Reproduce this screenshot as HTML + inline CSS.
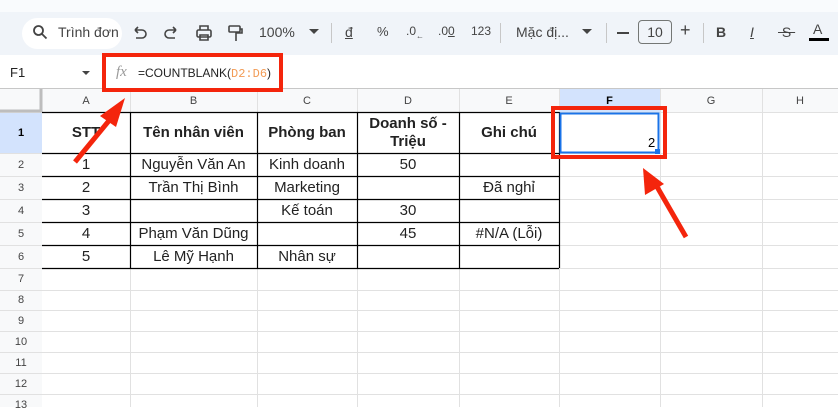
<!DOCTYPE html><html><head><meta charset="utf-8"><style>
*{margin:0;padding:0;box-sizing:border-box}
body{width:838px;height:407px;overflow:hidden;background:#fff;font-family:"Liberation Sans",Arial,sans-serif;position:relative;color:#222}
.a{position:absolute}
.tb{left:0;top:12px;width:838px;height:43px;background:#f0f4f9}
.t{position:absolute;font-size:14px;color:#444;top:24px}
.cell{position:absolute;font-size:15px;color:#222;text-align:center;display:flex;align-items:center;justify-content:center;line-height:18px}
.hd{position:absolute;font-size:11px;color:#444;display:flex;align-items:center;justify-content:center}
</style></head><body>
<div class="a" style="left:0;top:0;width:838px;height:12px;background:#f9fbfd"></div>
<div class="a tb"></div>
<div class="a" style="left:22px;top:18px;width:100px;height:31px;background:#fff;border-radius:16px"></div>
<svg class="a" style="left:32px;top:24px" width="16" height="16" viewBox="0 0 16 16"><circle cx="6.5" cy="6.5" r="4.5" fill="none" stroke="#444" stroke-width="1.8"/><path d="M10 10l4.5 4.5" stroke="#444" stroke-width="1.8"/></svg>
<div class="t" style="left:58px">Trình đơn</div>
<svg class="a" style="left:131px;top:24px;width:150px;height:18px" viewBox="0 0 150 18" fill="none" stroke="#444" stroke-width="1.6">
<path d="M4 6h7a4 4 0 010 8H5M4 6l3-3M4 6l3 3"/>
<path d="M45 6h-7a4 4 0 000 8h6M45 6l-3-3M45 6l-3 3"/>
<rect x="66" y="6" width="14" height="7" rx="1.5"/><path d="M69 6V2h8v4M69 11h8v5h-8z"/>
<rect x="98" y="2" width="11" height="6" rx="1"/><path d="M109 5h2v4h-6v2M105 11v6"/>
</svg>
<div class="t" style="left:259px">100%</div>
<div class="a" style="left:309px;top:29px;border:5px solid transparent;border-top-color:#444;border-bottom:0"></div>
<div class="a" style="left:331px;top:23px;width:1px;height:20px;background:#c7c7c7"></div>
<div class="t" style="left:345px;text-decoration:underline">đ</div>
<div class="t" style="left:377px;font-size:13px">%</div>
<div class="t" style="left:406px;font-size:12px">.0<sub style="font-size:8px">←</sub></div>
<div class="t" style="left:438px;font-size:12px">.0<span style="text-decoration:underline">0</span></div>
<div class="t" style="left:471px;font-size:12px">123</div>
<div class="a" style="left:500px;top:23px;width:1px;height:20px;background:#c7c7c7"></div>
<div class="t" style="left:516px">Mặc đị...</div>
<div class="a" style="left:582px;top:29px;border:5px solid transparent;border-top-color:#444;border-bottom:0"></div>
<div class="a" style="left:606px;top:23px;width:1px;height:20px;background:#c7c7c7"></div>
<div class="a" style="left:617px;top:32px;width:12px;height:2px;background:#444"></div>
<div class="a" style="left:638px;top:20px;width:34px;height:24px;border:1px solid #747775;border-radius:4px;font-size:14px;text-align:center;line-height:22px;color:#444">10</div>
<div class="t" style="left:680px;font-size:18px;top:20px">+</div>
<div class="a" style="left:703px;top:23px;width:1px;height:20px;background:#c7c7c7"></div>
<div class="t" style="left:716px;font-weight:bold">B</div>
<div class="t" style="left:750px;font-style:italic;text-decoration:underline">I</div>
<div class="t" style="left:778px;text-decoration:line-through">&nbsp;S&nbsp;</div>
<div class="t" style="left:813px;top:21px">A</div>
<div class="a" style="left:809px;top:38px;width:20px;height:3px;background:#000"></div>
<div class="a" style="left:10px;top:65px;font-size:13px">F1</div>
<div class="a" style="left:82px;top:71px;border:4px solid transparent;border-top-color:#444;border-bottom:0"></div>
<div class="a" style="left:116px;top:64px;font-size:15px;font-style:italic;color:#999;font-family:'Liberation Serif',serif">fx</div>
<div class="a" style="left:138px;top:66px;font-size:12px">=COUNTBLANK(<span style="color:#f29b55;font-family:'Liberation Mono',monospace">D2:D6</span>)</div>
<div class="a" style="left:0;top:88px;width:838px;height:1px;background:#c7c7c7"></div>
<svg class="a" style="left:0;top:89px" width="838" height="318">
<rect x="0" y="0" width="838" height="23" fill="#f8f9fa"/>
<rect x="0" y="0" width="42" height="318" fill="#f8f9fa"/>
<rect x="559" y="0" width="101" height="23" fill="#d3e3fd"/>
<rect x="0" y="23" width="42" height="41" fill="#d3e3fd"/>
<g stroke="#e1e1e1" stroke-width="1">
<path d="M0 23.5H838M0 87.5H838M0 110.5H838M0 133.5H838M0 156.5H838M0 179.5H838M0 201.5H838M0 221.5H838M0 242.5H838M0 263.5H838M0 284.5H838M0 305.5H838"/>
<path d="M130.5 0V318M257.5 0V318M357.5 0V318M459.5 0V318M559.5 0V318M660.5 0V318M762.5 0V318"/>
<path d="M0 64.5H838"/>
</g>
<rect x="0" y="0" width="41" height="22" fill="#f8f9fa"/>
<path d="M41 0V23M0 22H42" stroke="#bdbdbd" stroke-width="3"/>
<g stroke="#000" stroke-width="1.2" fill="none">
<path d="M42 23.5H559M42 64.5H559M42 87.5H559M42 110.5H559M42 133.5H559M42 156.5H559M42 179.5H559"/>
<path d="M130.5 23V179M257.5 23V179M357.5 23V179M459.5 23V179M559.5 23V179"/>
</g>
<rect x="560.5" y="24.5" width="98" height="39" fill="none" stroke="#1a73e8" stroke-width="2"/>
<rect x="655" y="60" width="5" height="5" fill="#1a73e8"/>
</svg>
<div class="hd" style="left:42px;top:89px;width:88px;height:23px">A</div>
<div class="hd" style="left:130px;top:89px;width:127px;height:23px">B</div>
<div class="hd" style="left:257px;top:89px;width:100px;height:23px">C</div>
<div class="hd" style="left:357px;top:89px;width:102px;height:23px">D</div>
<div class="hd" style="left:459px;top:89px;width:100px;height:23px">E</div>
<div class="hd" style="left:559px;top:89px;width:101px;height:23px;font-weight:bold;color:#000">F</div>
<div class="hd" style="left:660px;top:89px;width:102px;height:23px">G</div>
<div class="hd" style="left:762px;top:89px;width:76px;height:23px">H</div>
<div class="hd" style="left:0;top:112px;width:42px;height:41px;font-weight:bold;color:#000">1</div>
<div class="hd" style="left:0;top:153px;width:42px;height:23px">2</div>
<div class="hd" style="left:0;top:176px;width:42px;height:23px">3</div>
<div class="hd" style="left:0;top:199px;width:42px;height:23px">4</div>
<div class="hd" style="left:0;top:222px;width:42px;height:23px">5</div>
<div class="hd" style="left:0;top:245px;width:42px;height:23px">6</div>
<div class="hd" style="left:0;top:268px;width:42px;height:22px">7</div>
<div class="hd" style="left:0;top:290px;width:42px;height:20px">8</div>
<div class="hd" style="left:0;top:310px;width:42px;height:21px">9</div>
<div class="hd" style="left:0;top:331px;width:42px;height:21px">10</div>
<div class="hd" style="left:0;top:352px;width:42px;height:21px">11</div>
<div class="hd" style="left:0;top:373px;width:42px;height:21px">12</div>
<div class="hd" style="left:0;top:394px;width:42px;height:21px">13</div>
<div class="cell" style="left:42px;top:112px;width:88px;height:41px;font-weight:bold">STT</div>
<div class="cell" style="left:130px;top:112px;width:127px;height:41px;font-weight:bold">Tên nhân viên</div>
<div class="cell" style="left:257px;top:112px;width:100px;height:41px;font-weight:bold">Phòng ban</div>
<div class="cell" style="left:357px;top:112px;width:102px;height:41px;font-weight:bold">Doanh số -<br>Triệu</div>
<div class="cell" style="left:459px;top:112px;width:100px;height:41px;font-weight:bold">Ghi chú</div>
<div class="a" style="left:648px;top:135px;font-size:13px;color:#000">2</div>
<div class="cell" style="left:42px;top:153px;width:88px;height:23px">1</div>
<div class="cell" style="left:130px;top:153px;width:127px;height:23px">Nguyễn Văn An</div>
<div class="cell" style="left:257px;top:153px;width:100px;height:23px">Kinh doanh</div>
<div class="cell" style="left:357px;top:153px;width:102px;height:23px">50</div>
<div class="cell" style="left:42px;top:176px;width:88px;height:23px">2</div>
<div class="cell" style="left:130px;top:176px;width:127px;height:23px">Trần Thị Bình</div>
<div class="cell" style="left:257px;top:176px;width:100px;height:23px">Marketing</div>
<div class="cell" style="left:459px;top:176px;width:100px;height:23px">Đã nghỉ</div>
<div class="cell" style="left:42px;top:199px;width:88px;height:23px">3</div>
<div class="cell" style="left:257px;top:199px;width:100px;height:23px">Kế toán</div>
<div class="cell" style="left:357px;top:199px;width:102px;height:23px">30</div>
<div class="cell" style="left:42px;top:222px;width:88px;height:23px">4</div>
<div class="cell" style="left:130px;top:222px;width:127px;height:23px">Phạm Văn Dũng</div>
<div class="cell" style="left:357px;top:222px;width:102px;height:23px">45</div>
<div class="cell" style="left:459px;top:222px;width:100px;height:23px">#N/A (Lỗi)</div>
<div class="cell" style="left:42px;top:245px;width:88px;height:23px">5</div>
<div class="cell" style="left:130px;top:245px;width:127px;height:23px">Lê Mỹ Hạnh</div>
<div class="cell" style="left:257px;top:245px;width:100px;height:23px">Nhân sự</div>
<svg class="a" style="left:0;top:0" width="838" height="407">
<rect x="104" y="55" width="177" height="35" fill="none" stroke="#f4250c" stroke-width="4"/>
<rect x="553" y="108" width="112" height="49" fill="none" stroke="#f4250c" stroke-width="4"/>
<path d="M75 162L112 117" stroke="#f4250c" stroke-width="5"/>
<path d="M125 98L100 116L116 127Z" fill="#f4250c"/>
<path d="M686 237L656 185" stroke="#f4250c" stroke-width="5"/>
<path d="M643 168L645 195L664 184Z" fill="#f4250c"/>
</svg>
</body></html>
